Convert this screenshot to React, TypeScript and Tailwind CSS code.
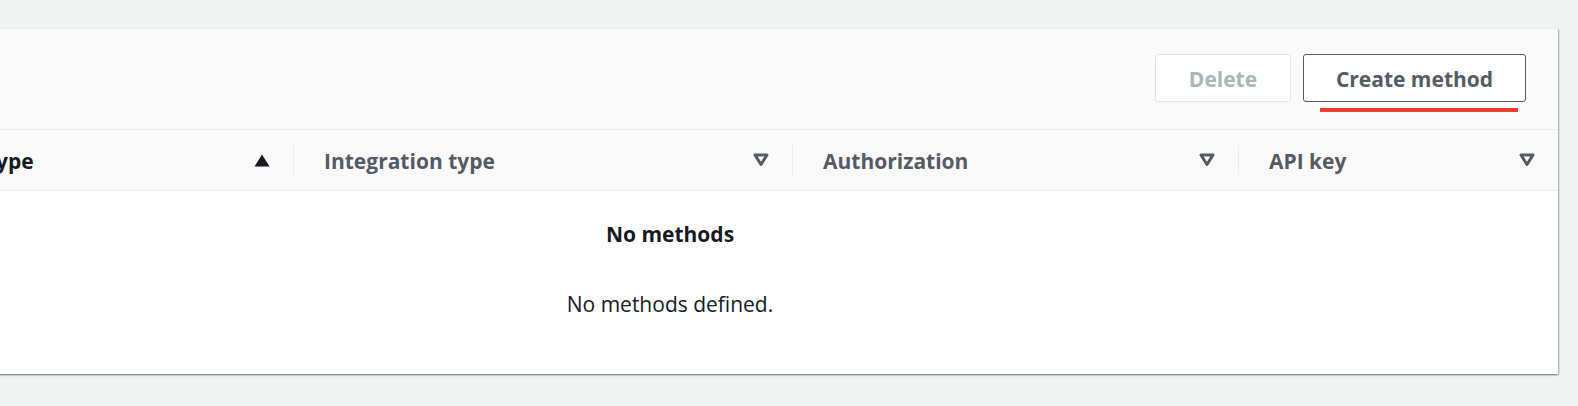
import type { ReactNode } from "react";

type Col = { label: string; sorted?: boolean };

const columns: Col[] = [
  { label: "Method type", sorted: true },
  { label: "Integration type" },
  { label: "Authorization" },
  { label: "API key" },
];

function SortUp() {
  return (
    <svg width="16" height="13" viewBox="0 0 16 13" aria-hidden="true">
      <path d="M8 0.5 L15.5 12.5 H0.5 Z" fill="#16191f" />
    </svg>
  );
}

function SortDown() {
  return (
    <svg width="16" height="14" viewBox="0 0 16 14" aria-hidden="true">
      <path
        d="M2 2 H14 L8 11.5 Z"
        fill="none"
        stroke="#545b64"
        strokeWidth="3"
        strokeLinejoin="round"
      />
    </svg>
  );
}

function HeaderCell({ col, first }: { col: Col; first?: boolean }) {
  return (
    <div className="relative flex h-full items-center justify-between pl-[31px] pr-[23px]">
      {!first && (
        <span className="absolute left-0 top-1/2 h-[30px] w-px -translate-y-1/2 bg-[#eaeded]" />
      )}
      <span
        className={
          col.sorted
            ? "pt-[4px] text-[21px] font-bold text-[#16191f]"
            : "pt-[4px] text-[21px] font-bold text-[#545b64]"
        }
      >
        {col.label}
      </span>
      {col.sorted ? <SortUp /> : <SortDown />}
    </div>
  );
}

function Button({ children, disabled }: { children: ReactNode; disabled?: boolean }) {
  return (
    <button
      type="button"
      disabled={disabled}
      className={
        disabled
          ? "h-[48px] rounded-[3px] border border-[#e3e6e6] bg-white pt-[3px] text-[21px] font-bold text-[#aab7b8]"
          : "h-[48px] rounded-[3px] border-[1.5px] border-[#545b64] bg-white pt-[3px] text-[21px] font-bold text-[#545b64]"
      }
    >
      {children}
    </button>
  );
}

export default function App() {
  return (
    <div
      className="min-h-[406px] overflow-hidden bg-[#f2f3f3] pt-[28px]"
      style={{ fontFamily: '"Open Sans", "Noto Sans", Arial, sans-serif' }}
    >
      <div className="ml-[-218px] w-[1776px] border-t border-[#eaeded] bg-white shadow-[0_1.5px_1.5px_0_rgba(0,28,36,0.35),1.5px_1px_1.5px_0_rgba(0,28,36,0.2)]">
        <div className="flex h-[101px] items-start justify-end gap-[14px] border-b border-[#eaeded] bg-[#fafafa] pr-[32px] pt-[25px]">
          <div className="w-[134px]">
            <Button disabled>
              <span className="block w-[134px]">Delete</span>
            </Button>
          </div>
          <div className="relative">
            <Button>
              <span className="block w-[221px]">Create method</span>
            </Button>
            <span className="absolute left-[17px] right-[8px] top-[54px] h-[4px] bg-[#e8412b]" />
          </div>
        </div>

        <div className="grid h-[61px] grid-cols-[87px_424px_499px_446px_320px] border-b border-[#eaeded] bg-[#fafafa]">
          <div />
          {columns.map((c, i) => (
            <HeaderCell key={c.label} col={c} first={i === 0} />
          ))}
        </div>

        <div className="flex h-[183px] flex-col items-center pt-[28px] text-[#16191f]">
          <div className="text-[21px] font-bold leading-[30px]">No methods</div>
          <div className="mt-[40px] text-[21px] leading-[30px]">No methods defined.</div>
        </div>
      </div>
    </div>
  );
}
